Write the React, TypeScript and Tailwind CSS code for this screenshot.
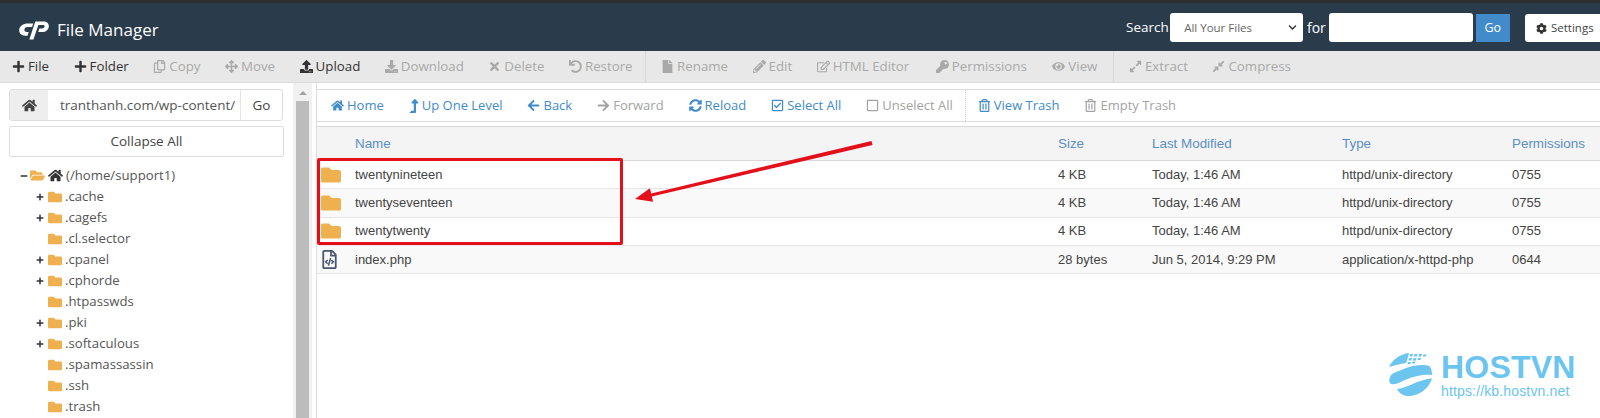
import React from "react";
import {
  FaPlus, FaRegCopy, FaArrowsAlt, FaUpload, FaDownload, FaTimes, FaUndo, FaFile, FaPencilAlt, FaRegEdit, FaKey, FaEye,
  FaExpandAlt, FaCompressAlt, FaHome, FaLevelUpAlt, FaArrowLeft, FaArrowRight, FaSyncAlt, FaRegCheckSquare, FaRegSquare,
  FaRegTrashAlt, FaCog, FaFolder, FaFolderOpen, FaRegFileCode, FaChevronDown, FaMinus,
} from "react-icons/fa";

type Tool = { icon: React.ComponentType<{ className?: string }>; label: string; on?: boolean; sep?: boolean; extra?: string };

const tools: Tool[] = [
  { icon: FaPlus, label: "File", on: true },
  { icon: FaPlus, label: "Folder", on: true },
  { icon: FaRegCopy, label: "Copy" },
  { icon: FaArrowsAlt, label: "Move" },
  { icon: FaUpload, label: "Upload", on: true },
  { icon: FaDownload, label: "Download" },
  { icon: FaTimes, label: "Delete" },
  { icon: FaUndo, label: "Restore", sep: true },
  { icon: FaFile, label: "Rename", extra: "ml-[4px]" },
  { icon: FaPencilAlt, label: "Edit" },
  { icon: FaRegEdit, label: "HTML Editor" },
  { icon: FaKey, label: "Permissions", extra: "ml-[2px]" },
  { icon: FaEye, label: "View", sep: true, extra: "ml-[1px]" },
  { icon: FaExpandAlt, label: "Extract", extra: "ml-[7px]" },
  { icon: FaCompressAlt, label: "Compress" },
];

const nav: Tool[] = [
  { icon: FaHome, label: "Home", on: true },
  { icon: FaLevelUpAlt, label: "Up One Level", on: true },
  { icon: FaArrowLeft, label: "Back", on: true },
  { icon: FaArrowRight, label: "Forward" },
  { icon: FaSyncAlt, label: "Reload", on: true },
  { icon: FaRegCheckSquare, label: "Select All", on: true },
  { icon: FaRegSquare, label: "Unselect All", sep: true },
  { icon: FaRegTrashAlt, label: "View Trash", on: true },
  { icon: FaRegTrashAlt, label: "Empty Trash" },
];

const tree: [string, boolean][] = [
  [".cache", true], [".cagefs", true], [".cl.selector", false], [".cpanel", true], [".cphorde", true], [".htpasswds", false],
  [".pki", true], [".softaculous", true], [".spamassassin", false], [".ssh", false], [".trash", false],
];

const rows = [
  ["twentynineteen", "4 KB", "Today, 1:46 AM", "httpd/unix-directory", "0755"],
  ["twentyseventeen", "4 KB", "Today, 1:46 AM", "httpd/unix-directory", "0755"],
  ["twentytwenty", "4 KB", "Today, 1:46 AM", "httpd/unix-directory", "0755"],
  ["index.php", "28 bytes", "Jun 5, 2014, 9:29 PM", "application/x-httpd-php", "0644"],
];

const cols = "grid grid-cols-[38px_703px_94px_190px_170px_1fr] items-center";

function CpLogo() {
  return (
    <svg viewBox="0 0 30 20" className="w-[30px] h-[20px] shrink-0" fill="#fff">
      <path d="M9 3.500h5.200l-1.100 3.600H8.400c-1.700 0-2.900 1-3 2.600-.1 1.300.8 2.200 2.200 2.200h2.100l-1.100 3.800H6.200C2.400 15.700 0 13.300.2 9.800.4 6 4.200 3.500 9 3.500z" />
      <path d="M16.300 1.500h8.300c3.400 0 5.600 2.100 5.200 5.200-.4 3.200-3 5.300-6.500 5.300h-4l1-3.600h2.900c1.200 0 2.200-.7 2.400-1.800.1-1-.5-1.600-1.600-1.600h-4.600L14.400 19.500h-4.100z" />
    </svg>
  );
}

function HostLogo() {
  return (
    <div className="absolute left-[1388px] top-[352px] flex items-start gap-[8px] text-[#6cc5ef]">
      <svg viewBox="0 0 45 44" className="w-[45px] h-[44px] shrink-0" fill="#6cc5ef">
        <path d="M1 15C4 8 12 2 21 1L20 5 19 8 18 11C11 12 5 14 1 15z" />
        <path d="M22 2h3l-.6 2.500h-3zM26.500 2h3l-.6 2.500h-3zM31 2h3l-.6 2.500h-3zM35.500 2.500h3l-.6 2h-3zM21 6h3l-.6 2.500h-3zM25.500 6h3l-.6 2.500h-3zM30 6h3l-.6 2h-3zM20 10h3l-.6 2h-3zM24.500 9.500h3l-.6 2h-3z" />
        <path d="M2 25C4 20 10 20 18 16 26 13 36 12 41 14 43 15 44 19 44 23 36 22 26 24 17 28 11 31 4 34 2 31 1 30 1 27 2 25z" />
        <path d="M9 37C18 36 27 30 36 28 39 27 42 26.500 44 26.500 41 36 32 44 20 44 15 44 11 41 9 37z" />
      </svg>
      <div className="flex flex-col font-['Liberation_Sans',sans-serif]">
        <span className="text-[32px] leading-[30px] font-bold tracking-[0.2px]">HOSTVN</span>
        <span className="mt-[2px] text-[14px] leading-[14px] tracking-[0.15px]">https://kb.hostvn.net</span>
      </div>
    </div>
  );
}

export default function App() {
  return (
    <div className="relative w-[1600px] h-[418px] overflow-hidden bg-white flex flex-col font-['Open_Sans',sans-serif] text-[13px] text-[#333]">
      <div className="h-[3px] bg-[#2e2e2e] shrink-0" />
      <header className="h-[48px] shrink-0 bg-[#2a3b4c] flex items-center pl-[19px] overflow-hidden">
        <div className="flex items-center mt-[6px]">
          <CpLogo />
          <span className="ml-[8px] text-white text-[17px]">File Manager</span>
        </div>
        <div className="ml-auto flex items-center text-white shrink-0 w-[474px] mt-[1px]">
          <span className="text-[13.500px] w-[45px]">Search</span>
          <div className="w-[135px] h-[29px] bg-white rounded-[3px] flex items-center justify-between pl-[14px] pr-[6px] text-[#666] text-[11.500px]">
            All Your Files
            <FaChevronDown className="w-[9px] h-[9px] text-[#333]" />
          </div>
          <span className="ml-[4px] w-[22px] text-[14px]">for</span>
          <div className="w-[147px] h-[29px] bg-white rounded-[3px]" />
          <div className="ml-[3px] w-[35px] h-[28px] mt-[1px] bg-[#428bca] text-white text-[12.500px] flex items-center justify-center">Go</div>
          <div className="ml-[15px] w-[75px] h-[28px] mt-[1px] bg-white rounded-l-[3px] text-[#444] text-[11.500px] flex items-center pl-[11px] gap-[4px] shrink-0">
            <FaCog className="w-[11px] h-[11px] text-[#333]" />
            Settings
          </div>
        </div>
      </header>

      <div className="h-[32px] shrink-0 bg-[#e8e8e8] border-b border-[#dadada] flex items-center pl-[12px] gap-[24.500px] overflow-hidden">
        {tools.map((t) => (
          <div key={t.label} className={`flex items-center gap-[3px] relative shrink-0 ${t.on ? "text-[#333]" : "text-[#a9a9a9]"} ${t.extra ?? ""}`}>
            <t.icon className="w-[13px] h-[13px]" />
            <span className="text-[13.300px]">{t.label}</span>
            {t.sep && <span className={`absolute -top-[6px] h-[31px] border-r border-[#d8d8d8] ${t.label === "View" ? "-right-[17px]" : "-right-[13px]"}`} />}
          </div>
        ))}
      </div>

      <div className="flex-1 flex min-h-0">
        <aside className="w-[293px] shrink-0 pl-[9px] pr-[9px] pt-[6px] flex flex-col">
          <div className="h-[32px] w-[274px] border border-[#ddd] rounded-[3px] flex items-stretch text-[13.500px]">
            <div className="w-[38px] bg-[#eee] flex items-center justify-center rounded-l-[3px]">
              <FaHome className="w-[15px] h-[15px] text-[#444]" />
            </div>
            <div className="flex-1 flex items-center pl-[12px] text-[#555] overflow-hidden whitespace-nowrap border-r border-[#e5e5e5]">tranthanh.com/wp-content/</div>
            <div className="w-[41px] flex items-center justify-center text-[#444]">Go</div>
          </div>
          <div className="mt-[5px] h-[31px] w-[275px] shrink-0 border border-[#ddd] rounded-[2px] flex items-center justify-center text-[13.500px] text-[#444]">Collapse All</div>
          <div className="mt-[8px] text-[13.200px] leading-[21px] text-[#555]">
            <div className="flex items-center h-[21px] pl-[11px]">
              <FaMinus className="w-[8px] h-[8px] text-[#333]" />
              <FaFolderOpen className="ml-[2px] w-[15px] h-[15px] text-[#efb04f]" />
              <FaHome className="ml-[3px] w-[15px] h-[15px] text-[#333]" />
              <span className="ml-[3px]">(/home/support1)</span>
            </div>
            {tree.map(([name, exp]) => (
              <div key={name} className="flex items-center h-[21px] pl-[27px]">
                <span className="w-[12px] shrink-0">{exp && <FaPlus className="w-[8px] h-[8px] text-[#333]" />}</span>
                <FaFolder className="w-[14px] h-[14px] text-[#efb04f]" />
                <span className="ml-[3px]">{name}</span>
              </div>
            ))}
          </div>
        </aside>

        <div className="w-[19px] shrink-0 bg-[#f1f1f1] flex flex-col items-center">
          <span className="mt-[8px] w-0 h-0 border-x-[4px] border-x-transparent border-b-[4px] border-b-[#a3a3a3]" />
          <div className="mt-[6px] w-[13px] flex-1 bg-[#bcbcbc]" />
        </div>

        <main className="ml-[4px] flex-1 min-w-0 border-l border-[#ddd] pt-[6px]">
          <div className="h-[33px] border-y border-[#ddd] flex items-center pl-[14px] gap-[25px]">
            {nav.map((t) => (
              <div key={t.label} className={`flex items-center gap-[3px] relative shrink-0 ${t.on ? "text-[#428bca]" : "text-[#a3a3a3]"}`}>
                <t.icon className={t.label === "Up One Level" ? "w-[10px] h-[14px]" : "w-[13px] h-[13px]"} />
                <span className="text-[13px]">{t.label}</span>
                {t.sep && <span className="absolute -right-[13px] -top-[6px] h-[31px] border-r border-dotted border-[#ccc]" />}
              </div>
            ))}
          </div>
          <div className="mt-[4px] font-['Liberation_Sans',sans-serif] text-[13px] text-[#444]">
            <div className={`${cols} h-[35px] pt-[1px] bg-[#f4f4f4] border-y border-[#d8d8d8] text-[#5b8fc4] text-[13.400px]`}>
              <span />
              <span>Name</span>
              <span>Size</span>
              <span>Last Modified</span>
              <span>Type</span>
              <span>Permissions</span>
            </div>
            {rows.map((r, i) => (
              <div key={r[0]} className={`${cols} h-[28.300px] border-b border-[#e6e6e6] ${i % 2 ? "bg-[#f9f9f9]" : "bg-white"}`}>
                <span className="pl-[4px] flex items-center">
                  {i < 3 ? <FaFolder className="w-[20px] h-[20px] text-[#efb04f]" /> : <FaRegFileCode className="w-[15px] h-[19px] ml-[1px] text-[#4a5670]" />}
                </span>
                {r.map((c) => (
                  <span key={c} className="whitespace-nowrap">{c}</span>
                ))}
              </div>
            ))}
          </div>
        </main>
      </div>

      <div className="absolute left-[317px] top-[158px] w-[306px] h-[87px] border-[3px] border-[#e3101b] rounded-[2px]" />
      <svg className="absolute left-[620px] top-[135px] w-[260px] h-[75px]" viewBox="0 0 260 75" fill="#e3101b">
        <path d="M15 64 L29.900 53.200 L31.200 58.500 L251.500 6 L252.500 10 L31.800 61.500 L33.100 66.800 Z" />
      </svg>
      <HostLogo />
    </div>
  );
}
